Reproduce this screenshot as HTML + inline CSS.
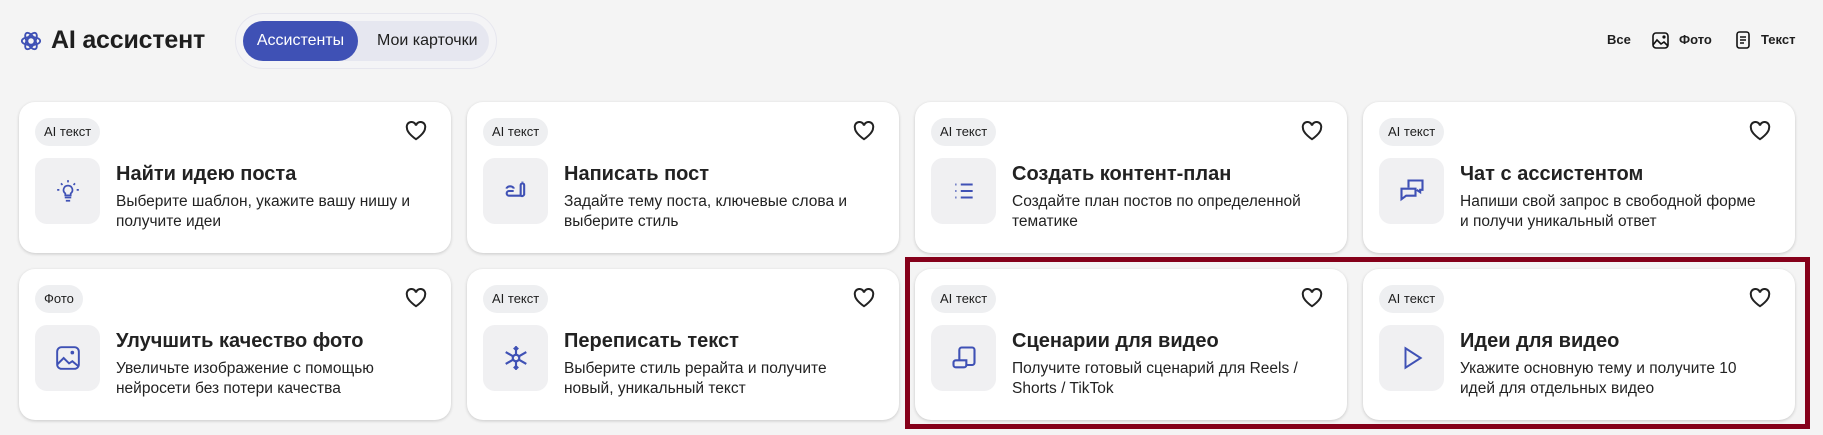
<!DOCTYPE html>
<html><head><meta charset="utf-8"><style>
*{box-sizing:border-box;margin:0;padding:0}
body{width:1823px;height:435px;background:#f4f4f4;font-family:"Liberation Sans",sans-serif;color:#1e1e1e;position:relative;overflow:hidden}
.logo{position:absolute;left:20px;top:30px}
.title{position:absolute;left:51px;top:26px;font-size:25px;font-weight:bold;letter-spacing:-0.2px}
.seg{position:absolute;left:235px;top:13px;width:262px;height:56px;border-radius:28px;border:1px solid #e6e6ee;background:#f4f4f6}
.seg .in{position:absolute;left:7px;top:7px;width:246px;height:40px;border-radius:20px;background:#e6e7f0}
.pill{position:absolute;left:0;top:0;width:115px;height:40px;border-radius:20px;background:#3f51b5;color:#fff;font-size:16px;line-height:40px;text-align:center}
.seg .other{position:absolute;left:134px;top:0;line-height:40px;font-size:16px;color:#1e1e1e}
.f{position:absolute;top:31px;font-size:13px;font-weight:bold;line-height:18px}
.card{position:absolute;width:432px;height:151px;background:#fff;border-radius:16px;box-shadow:0 1px 3px rgba(0,0,0,.18)}
.tag{position:absolute;left:16px;top:16px;height:28px;padding:0 9px;border-radius:14px;background:#eeeff1;font-size:13px;line-height:28px}
.heart{position:absolute;right:24px;top:19px}
.ib{position:absolute;left:16px;top:56px;width:65px;height:66px;border-radius:12px;background:#f0f0f2;display:flex;align-items:center;justify-content:center}
.t{position:absolute;left:97px;top:61px;font-size:20px;font-weight:bold;color:#222}
.d{position:absolute;left:97px;top:90px;width:303px;font-size:15.5px;line-height:20px;color:#222}
.red{position:absolute;left:905px;top:257px;width:905px;height:172px;border:5px solid #85001a}
</style></head><body>
<svg class="logo" width="22" height="22" viewBox="0 0 24 24" fill="none" stroke="#3f51b5" stroke-width="2"><circle cx="12" cy="12" r="4"/><ellipse cx="12" cy="12" rx="10" ry="4.5"/><ellipse cx="12" cy="12" rx="10" ry="4.5" transform="rotate(60 12 12)"/><ellipse cx="12" cy="12" rx="10" ry="4.5" transform="rotate(120 12 12)"/></svg>
<div class="title">AI ассистент</div>
<div class="seg"><div class="in"><div class="pill">Ассистенты</div><div class="other">Мои карточки</div></div></div>
<div class="f" style="left:1607px">Все</div>
<svg style="position:absolute;left:1652px;top:32px" width="17" height="17" viewBox="0 0 17 17" fill="none" stroke="#111" stroke-width="1.6"><rect x="1" y="1" width="15" height="15" rx="3"/><path d="M1 13l4-5 4 4 3-2 4 4"/><circle cx="12" cy="5" r=".8" fill="#111"/></svg>
<div class="f" style="left:1679px">Фото</div>
<svg style="position:absolute;left:1736px;top:31px" width="14" height="18" viewBox="0 0 14 18" fill="none" stroke="#111" stroke-width="1.6"><rect x="1" y="1" width="12" height="16" rx="2.5"/><path d="M4 6h6M4 9h6M4 12h4"/></svg>
<div class="f" style="left:1761px">Текст</div>

<div class="card" style="left:19px;top:102px"><div class="tag">AI текст</div>
<svg class="heart" width="22" height="20" viewBox="0 0 24 22" fill="none" stroke="#222" stroke-width="2.2"><path d="M12 20S2 13.5 2 7.5A5 5 0 0 1 12 5a5 5 0 0 1 10 2.5C22 13.5 12 20 12 20z"/></svg>
<div class="ib"><svg width="26" height="26" viewBox="0 0 24 24" fill="none" stroke="#3f51b5" stroke-width="1.6"><path d="M9 18h6M10 21h4M12 7a4 4 0 0 0-2.5 7.2V16h5v-1.8A4 4 0 0 0 12 7zM12 2v2M4 11H2M22 11h-2M5.5 5l1.4 1.4M18.5 5l-1.4 1.4"/></svg></div>
<div class="t">Найти идею поста</div><div class="d">Выберите шаблон, укажите вашу нишу и получите идеи</div></div>

<div class="card" style="left:467px;top:102px"><div class="tag">AI текст</div>
<svg class="heart" width="22" height="20" viewBox="0 0 24 22" fill="none" stroke="#222" stroke-width="2.2"><path d="M12 20S2 13.5 2 7.5A5 5 0 0 1 12 5a5 5 0 0 1 10 2.5C22 13.5 12 20 12 20z"/></svg>
<div class="ib"><svg width="28" height="28" viewBox="0 0 24 24" fill="none" stroke="#3f51b5" stroke-width="1.8"><path d="M10 12H6a2 2 0 0 0 0 4h10a2 2 0 0 0 3-1V7a1.5 1.5 0 0 0-3 0v9M4 10a3 2 0 0 1 6 0M17.5 4v.5"/></svg></div>
<div class="t">Написать пост</div><div class="d">Задайте тему поста, ключевые слова и выберите стиль</div></div>

<div class="card" style="left:915px;top:102px"><div class="tag">AI текст</div>
<svg class="heart" width="22" height="20" viewBox="0 0 24 22" fill="none" stroke="#222" stroke-width="2.2"><path d="M12 20S2 13.5 2 7.5A5 5 0 0 1 12 5a5 5 0 0 1 10 2.5C22 13.5 12 20 12 20z"/></svg>
<div class="ib"><svg width="26" height="26" viewBox="0 0 24 24" fill="none" stroke="#3f51b5" stroke-width="1.8"><path d="M9 6h11M9 12h11M9 18h11M4 6h1M4 12h1M4 18h1"/></svg></div>
<div class="t">Создать контент-план</div><div class="d">Создайте план постов по определенной тематике</div></div>

<div class="card" style="left:1363px;top:102px"><div class="tag">AI текст</div>
<svg class="heart" width="22" height="20" viewBox="0 0 24 22" fill="none" stroke="#222" stroke-width="2.2"><path d="M12 20S2 13.5 2 7.5A5 5 0 0 1 12 5a5 5 0 0 1 10 2.5C22 13.5 12 20 12 20z"/></svg>
<div class="ib"><svg width="28" height="28" viewBox="0 0 24 24" fill="none" stroke="#3f51b5" stroke-width="1.8"><path d="M9 9V3h12v8h-2v2l-3-2M3 10h12v6H7l-4 3z"/></svg></div>
<div class="t">Чат с ассистентом</div><div class="d">Напиши свой запрос в свободной форме и получи уникальный ответ</div></div>

<div class="card" style="left:19px;top:269px"><div class="tag">Фото</div>
<svg class="heart" width="22" height="20" viewBox="0 0 24 22" fill="none" stroke="#222" stroke-width="2.2"><path d="M12 20S2 13.5 2 7.5A5 5 0 0 1 12 5a5 5 0 0 1 10 2.5C22 13.5 12 20 12 20z"/></svg>
<div class="ib"><svg width="26" height="26" viewBox="0 0 24 24" fill="none" stroke="#3f51b5" stroke-width="1.8"><rect x="2" y="2" width="20" height="20" rx="4"/><path d="M2 18l6-6 5 5 3-2 6 5"/><circle cx="16" cy="7" r=".8" fill="#3f51b5"/></svg></div>
<div class="t">Улучшить качество фото</div><div class="d">Увеличьте изображение с помощью нейросети без потери качества</div></div>

<div class="card" style="left:467px;top:269px"><div class="tag">AI текст</div>
<svg class="heart" width="22" height="20" viewBox="0 0 24 22" fill="none" stroke="#222" stroke-width="2.2"><path d="M12 20S2 13.5 2 7.5A5 5 0 0 1 12 5a5 5 0 0 1 10 2.5C22 13.5 12 20 12 20z"/></svg>
<div class="ib"><svg width="26" height="26" viewBox="0 0 24 24" fill="none" stroke="#3f51b5" stroke-width="2"><path d="M12 1v22M2.5 6.5l19 11M2.5 17.5l19-11M10 2.5l2 2 2-2M10 21.5l2-2 2 2"/><circle cx="12" cy="12" r="3" fill="#f0f0f2"/></svg></div>
<div class="t">Переписать текст</div><div class="d">Выберите стиль рерайта и получите новый, уникальный текст</div></div>

<div class="card" style="left:915px;top:269px"><div class="tag">AI текст</div>
<svg class="heart" width="22" height="20" viewBox="0 0 24 22" fill="none" stroke="#222" stroke-width="2.2"><path d="M12 20S2 13.5 2 7.5A5 5 0 0 1 12 5a5 5 0 0 1 10 2.5C22 13.5 12 20 12 20z"/></svg>
<div class="ib"><svg width="28" height="28" viewBox="0 0 24 24" fill="none" stroke="#3f51b5" stroke-width="1.8"><path d="M8 14V5a2 2 0 0 1 2-2h9a2 2 0 0 1 2 2v11a2 2 0 0 1-2 2h-5M3 16a2 2 0 0 1 2-2h9v4a2 2 0 0 1-2 2H5a2 2 0 0 1-2-2z"/></svg></div>
<div class="t">Сценарии для видео</div><div class="d">Получите готовый сценарий для Reels / Shorts / TikTok</div></div>

<div class="card" style="left:1363px;top:269px"><div class="tag">AI текст</div>
<svg class="heart" width="22" height="20" viewBox="0 0 24 22" fill="none" stroke="#222" stroke-width="2.2"><path d="M12 20S2 13.5 2 7.5A5 5 0 0 1 12 5a5 5 0 0 1 10 2.5C22 13.5 12 20 12 20z"/></svg>
<div class="ib"><svg width="26" height="26" viewBox="0 0 24 24" fill="none" stroke="#3f51b5" stroke-width="1.8"><path d="M6 3l14 9-14 9z"/></svg></div>
<div class="t">Идеи для видео</div><div class="d">Укажите основную тему и получите 10 идей для отдельных видео</div></div>

<div class="red"></div>
</body></html>
